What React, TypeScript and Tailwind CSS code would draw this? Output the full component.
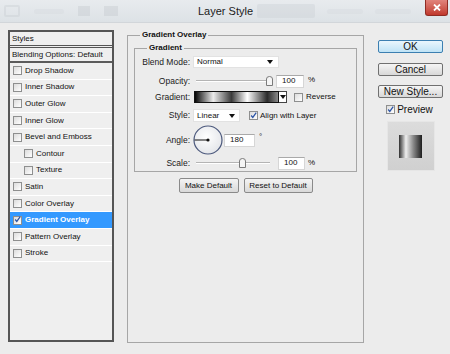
import React from 'react';

const Check = ({ checked = false }: { checked?: boolean }) => (
  <span className="w-[9px] h-[9px] shrink-0 border border-[#8e8f8f] bg-linear-to-br from-[#dcdcdc] to-white flex items-center justify-center">
    {checked && (
      <svg width="9" height="9" viewBox="0 0 9 9" className="-mt-[1px]">
        <path d="M1.5 4.5 L3.6 7 L8 0.8" fill="none" stroke="#2b54a6" strokeWidth="1.6" />
      </svg>
    )}
  </span>
);

const Arrow = () => (
  <svg width="6" height="4" viewBox="0 0 6 4">
    <path d="M0 0 H6 L3 4 Z" fill="#111" />
  </svg>
);

const Thumb = () => (
  <svg width="7" height="10" viewBox="0 0 7 10">
    <path d="M0.5 9.5 V3 Q0.5 0.5 3.5 0.5 Q6.5 0.5 6.5 3 V9.5 Z" fill="#f5f5f5" stroke="#7b7b7b" />
  </svg>
);

const Slider = ({ width, at }: { width: string; at: string }) => (
  <div className={`relative ${width} h-[10px] flex items-center`}>
    <div className="w-full h-[2px] border-t border-[#b4b4b4] border-b border-b-white" />
    <div className={`absolute top-0 ${at}`}>
      <Thumb />
    </div>
  </div>
);

const NumBox = ({ value, width }: { value: string; width: string }) => (
  <div className={`${width} h-[13px] bg-white border border-[#d6d6d6] border-t-[#a9a9a9] pl-[5px] flex items-center`}>
    {value}
  </div>
);

const styleItems: { label: string; indent?: boolean; active?: boolean }[] = [
  { label: 'Drop Shadow' },
  { label: 'Inner Shadow' },
  { label: 'Outer Glow' },
  { label: 'Inner Glow' },
  { label: 'Bevel and Emboss' },
  { label: 'Contour', indent: true },
  { label: 'Texture', indent: true },
  { label: 'Satin' },
  { label: 'Color Overlay' },
  { label: 'Gradient Overlay', active: true },
  { label: 'Pattern Overlay' },
  { label: 'Stroke' },
];

const TitleBar = () => (
  <div className="h-[23px] shrink-0 flex items-start bg-linear-to-b from-[#e8ebee] to-[#dde2e6] border-b border-[#d2d6da]">
    {/* faded toolbar behind the title */}
    <div className="w-[198px] h-[22px] flex items-center gap-[14px] pl-[4px] opacity-40">
      <div className="w-[16px] h-[12px] rounded-[2px] border-2 border-[#c9ced3]" />
      <div className="w-[30px] h-[5px] bg-[#d6dadf] rounded-full" />
      <div className="w-[12px] h-[10px] bg-[#c4c9ce]" />
      <div className="w-[14px] h-[10px] bg-[#c4c9ce]" />
    </div>
    <div className="h-[22px] flex items-center text-[11px] text-[#1b1b1b] font-['Liberation_Sans',sans-serif]">
      Layer Style
    </div>
    <div className="flex-1 h-[22px] flex items-center gap-[12px] pl-[4px] opacity-40">
      <div className="w-[58px] h-[14px] bg-[#ccd1d6] rounded-[2px]" />
      <div className="w-[36px] h-[5px] bg-[#d6dadf] rounded-full" />
      <div className="w-[36px] h-[5px] bg-[#d6dadf] rounded-full" />
    </div>
    <div className="w-[23px] h-[16px] mr-[2px] rounded-b-[3px] border border-t-0 border-[#8f2c24] bg-linear-to-b from-[#e1847c] to-[#c0372c] flex items-center justify-center">
      <svg width="8" height="7" viewBox="0 0 8 7">
        <path d="M1 0.5 L7 6.5 M7 0.5 L1 6.5" stroke="#fff" strokeWidth="1.8" />
      </svg>
    </div>
  </div>
);

const StylesList = () => (
  <div className="w-[106px] h-[312px] shrink-0 border-2 border-[#555] bg-[#efefef] flex flex-col">
    <div className="h-[16px] pl-[2px] flex items-center border-b-[3px] border-double border-[#555]">Styles</div>
    <div className="h-[15px] pl-[2px] flex items-center border-b-2 border-[#5b5b5b]">Blending Options: Default</div>
    {styleItems.map((item) => (
      <div
        key={item.label}
        className={`h-[16.6px] flex items-center gap-[3px] border-b border-white ${item.indent ? 'pl-[14px]' : 'pl-[3px]'} ${
          item.active ? 'bg-[#3399ff] text-white font-bold' : ''
        }`}
      >
        <Check checked={item.active} />
        <span>{item.label}</span>
      </div>
    ))}
  </div>
);

const Row = ({ label, className = '', children }: { label: string; className?: string; children: React.ReactNode }) => (
  <div className={`flex items-center ${className}`}>
    <div className="w-[58px] pr-[3px] text-right text-[8.5px] text-[#1a1a1a]">{label}</div>
    {children}
  </div>
);

const GradientOverlay = () => (
  <fieldset className="w-[237px] h-[313px] shrink-0 min-w-0 border border-[#a6a6a6] px-[6px]">
    <legend className="ml-[6px] px-[2px] font-bold leading-[10px]">Gradient Overlay</legend>
    <fieldset className="mt-[3px] min-w-0 border border-[#a6a6a6] pb-[2px]">
      <legend className="ml-[12px] px-[2px] font-bold leading-[10px]">Gradient</legend>
      <Row label="Blend Mode:" className="h-[12px] mt-[3px]">
        <div className="w-[86px] h-[12px] bg-white border border-[#e2e2e2] pl-[3px] pr-[5px] flex items-center justify-between">
          <span>Normal</span>
          <Arrow />
        </div>
      </Row>
      <Row label="Opacity:" className="h-[14px] mt-[6px]">
        <div className="ml-[3px]">
          <Slider width="w-[77px]" at="right-[0px]" />
        </div>
        <div className="ml-[3px]">
          <NumBox value="100" width="w-[28px]" />
        </div>
        <span className="ml-[4px] self-start">%</span>
      </Row>
      <Row label="Gradient:" className="h-[12px] mt-[3px]">
        <div className="ml-[1px] w-[85px] h-[12px] border border-[#111] bg-[linear-gradient(to_right,#050505_0%,#ececec_22%,#3a3a3a_44%,#ffffff_63%,#2b2b2b_87%,#8a8a8a_100%)]" />
        <div className="w-[8px] h-[12px] border border-l-0 border-[#444] bg-white flex items-center justify-center">
          <Arrow />
        </div>
        <div className="ml-[7px]">
          <Check />
        </div>
        <span className="ml-[3px]">Reverse</span>
      </Row>
      <Row label="Style:" className="h-[13px] mt-[6px]">
        <div className="w-[47px] h-[13px] bg-white border border-[#e2e2e2] pl-[3px] pr-[4px] flex items-center justify-between">
          <span>Linear</span>
          <Arrow />
        </div>
        <div className="ml-[9px]">
          <Check checked />
        </div>
        <span className="ml-[2px]">Align with Layer</span>
      </Row>
      <Row label="Angle:" className="h-[30px] mt-[3px]">
        <svg width="30" height="30" viewBox="0 0 30 30">
          <defs>
            <radialGradient id="dial" cx="0.45" cy="0.4" r="0.6">
              <stop offset="0" stopColor="#ffffff" />
              <stop offset="1" stopColor="#e4e6ea" />
            </radialGradient>
          </defs>
          <circle cx="15" cy="15" r="14" fill="url(#dial)" stroke="#4b587c" strokeWidth="1.2" />
          <line x1="1.5" y1="15" x2="15" y2="15" stroke="#111" strokeWidth="1" />
          <circle cx="15" cy="15" r="1.6" fill="#111" />
        </svg>
        <div className="ml-[1px]">
          <NumBox value="180" width="w-[31px]" />
        </div>
        <span className="ml-[4px] self-start mt-[8px] leading-[8px]">°</span>
      </Row>
      <Row label="Scale:" className="h-[12px] mt-[2px]">
        <div className="ml-[3px]">
          <Slider width="w-[74px]" at="left-[43px]" />
        </div>
        <div className="ml-[8px]">
          <NumBox value="100" width="w-[27px]" />
        </div>
        <span className="ml-[3px] self-start">%</span>
      </Row>
    </fieldset>
    <div className="mt-[6px] flex justify-center gap-[5px]">
      <button className="w-[60px] h-[15px] rounded-[2px] border border-[#8a8a8a] bg-linear-to-b from-[#f4f4f4] to-[#d9d9d9] text-[8px] flex items-center justify-center">
        Make Default
      </button>
      <button className="w-[69px] h-[15px] rounded-[2px] border border-[#8a8a8a] bg-linear-to-b from-[#f4f4f4] to-[#d9d9d9] text-[8px] flex items-center justify-center">
        Reset to Default
      </button>
    </div>
  </fieldset>
);

const SideButton = ({ label, primary = false }: { label: string; primary?: boolean }) => (
  <button
    className={`w-[65px] h-[13px] rounded-[2px] border flex items-center justify-center text-[10px] leading-none ${
      primary
        ? 'border-[#3c7fb1] bg-linear-to-b from-[#eaf6fd] to-[#bfe3f6]'
        : 'border-[#707070] bg-linear-to-b from-[#f5f5f5] to-[#d8d8d8]'
    }`}
  >
    {label}
  </button>
);

const SideColumn = () => (
  <div className="ml-[14px] mt-[10px] w-[65px] flex flex-col items-center text-[10px]">
    <SideButton label="OK" primary />
    <div className="mt-[10px]">
      <SideButton label="Cancel" />
    </div>
    <div className="mt-[9px]">
      <SideButton label="New Style..." />
    </div>
    <div className="mt-[7px] h-[9px] flex items-center gap-[2px] -ml-[2px]">
      <Check checked />
      <span className="leading-none">Preview</span>
    </div>
    <div className="mt-[7px] w-[48px] h-[50px] bg-linear-to-b from-[#dcdcdc] to-[#d0d0d0] border border-[#e6e6e6] flex items-center justify-center">
      <div className="w-[23px] h-[23px] bg-[linear-gradient(to_right,#2e2e2e_0%,#efefef_30%,#8a8a8a_62%,#1e1e1e_100%)]" />
    </div>
  </div>
);

export default function App() {
  return (
    <div className="w-[450px] h-[354px] overflow-hidden bg-[#ececec] flex flex-col font-['Liberation_Sans',Arial,sans-serif] text-[8px] text-[#111]">
      <TitleBar />
      <div className="flex items-start pl-[8px] pt-[7px]">
        <StylesList />
        <div className="ml-[13px]">
          <GradientOverlay />
        </div>
        <SideColumn />
      </div>
    </div>
  );
}
